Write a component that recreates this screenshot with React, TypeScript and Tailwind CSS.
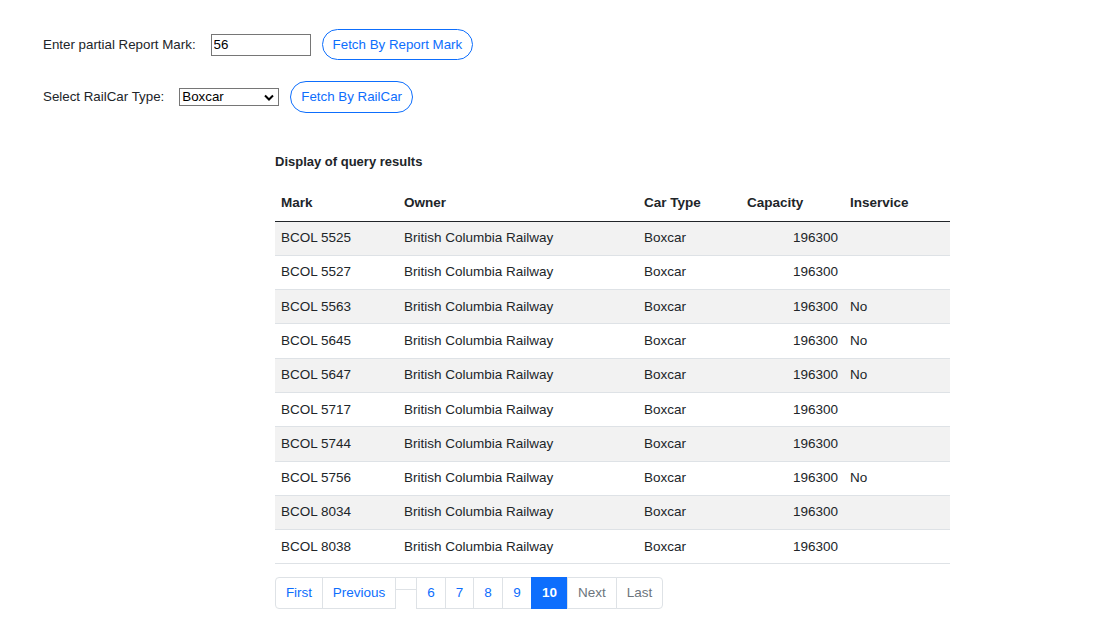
import React from 'react';

const rows = [
  { mark: 'BCOL 5525', inservice: '' },
  { mark: 'BCOL 5527', inservice: '' },
  { mark: 'BCOL 5563', inservice: 'No' },
  { mark: 'BCOL 5645', inservice: 'No' },
  { mark: 'BCOL 5647', inservice: 'No' },
  { mark: 'BCOL 5717', inservice: '' },
  { mark: 'BCOL 5744', inservice: '' },
  { mark: 'BCOL 5756', inservice: 'No' },
  { mark: 'BCOL 8034', inservice: '' },
  { mark: 'BCOL 8038', inservice: '' },
];

const pageLink = 'h-[32px] flex items-center justify-center border border-[#dee2e6] -ml-px text-[#0d6efd] bg-white';

export default function App() {
  return (
    <div className="min-h-screen bg-white text-[#212529] font-['Liberation_Sans',Arial,sans-serif] text-[13.33px]">
      <div className="pl-[43px] pt-[29px]">
        <div className="flex items-center h-[31px]">
          <span>Enter partial Report Mark:</span>
          <input
            defaultValue="56"
            className="ml-[15px] w-[100px] h-[22px] border border-[#767676] px-[2px] text-[13.33px] text-black outline-none"
          />
          <button className="ml-[11px] h-[31px] px-[10px] rounded-full border border-[#0d6efd] text-[#0d6efd] bg-white">
            Fetch By Report Mark
          </button>
        </div>
        <div className="flex items-center h-[32px] mt-[21px]">
          <span>Select RailCar Type:</span>
          <div className="ml-[15px] w-[100px] h-[18px] border border-[#767676] flex items-center justify-between pl-[2px] pr-[4px] text-black">
            <span>Boxcar</span>
            <svg width="10" height="7" viewBox="0 0 10 7" fill="none" stroke="#000" strokeWidth="2">
              <path d="M1 1.5l4 4 4-4" />
            </svg>
          </div>
          <button className="ml-[11px] h-[32px] px-[10px] rounded-full border border-[#0d6efd] text-[#0d6efd] bg-white">
            Fetch By RailCar
          </button>
        </div>
      </div>

      <div className="ml-[275px] w-[675px] mt-[41px]">
        <h5 className="font-bold text-[13px] leading-[16px] mt-[1px]">Display of query results</h5>
        <table className="w-full mt-[16px] border-collapse text-[13.5px]">
          <thead>
            <tr className="border-b border-[#212529] h-[35px]">
              <th className="text-left font-bold px-[6px] w-[123px]">Mark</th>
              <th className="text-left font-bold px-[6px] w-[240px]">Owner</th>
              <th className="text-left font-bold px-[6px] w-[103px]">Car Type</th>
              <th className="text-left font-bold px-[6px] w-[103px]">Capacity</th>
              <th className="text-left font-bold px-[6px]">Inservice</th>
            </tr>
          </thead>
          <tbody>
            {rows.map((r, i) => (
              <tr key={r.mark} className={`h-[34.3px] border-b border-[#dee2e6] ${i % 2 === 0 ? 'bg-[#f2f2f2]' : 'bg-white'}`}>
                <td className="px-[6px]">{r.mark}</td>
                <td className="px-[6px]">British Columbia Railway</td>
                <td className="px-[6px]">Boxcar</td>
                <td className="px-[6px] text-right">196300</td>
                <td className="px-[6px]">{r.inservice}</td>
              </tr>
            ))}
          </tbody>
        </table>

        <nav className="mt-[13px] flex items-start text-[13.5px]">
          <a className={`${pageLink} ml-0 w-[48px] rounded-l-[4px]`}>First</a>
          <a className={`${pageLink} w-[74px]`}>Previous</a>
          <span className="-ml-px w-[22px] h-[13px] border border-[#dee2e6]" />
          <a className={`${pageLink} w-[30px]`}>6</a>
          <a className={`${pageLink} w-[29px]`}>7</a>
          <a className={`${pageLink} w-[30px]`}>8</a>
          <a className={`${pageLink} w-[30px]`}>9</a>
          <a className="h-[32px] w-[37px] -ml-px flex items-center justify-center bg-[#0d6efd] border border-[#0d6efd] text-white font-bold">10</a>
          <a className={`${pageLink} w-[50px] !text-[#6c757d]`}>Next</a>
          <a className={`${pageLink} w-[47px] !text-[#6c757d] rounded-r-[4px]`}>Last</a>
        </nav>
      </div>
    </div>
  );
}
